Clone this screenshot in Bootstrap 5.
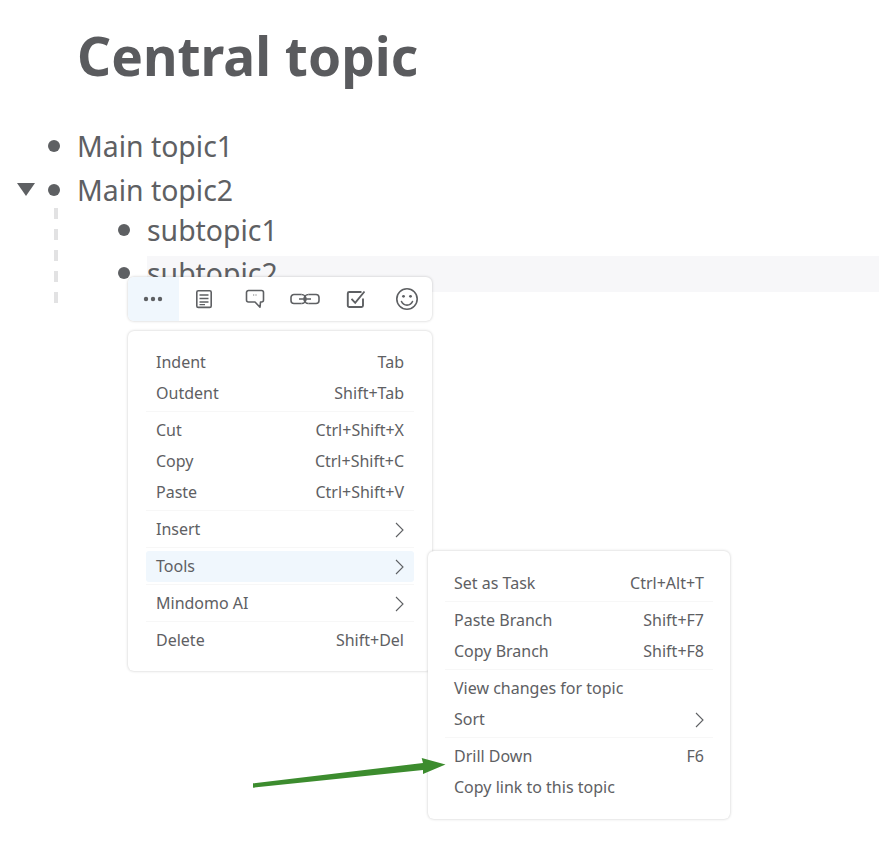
<!doctype html>
<html lang="en"><head><meta charset="utf-8"><title>Outline</title>
<link href="https://cdn.jsdelivr.net/npm/bootstrap@5.3.0/dist/css/bootstrap.min.css" rel="stylesheet">
<style>
html,body{height:100%}
body{font-family:"Noto Sans",sans-serif;color:#5e6063;background:#fff;overflow:hidden}
.stage{position:relative;width:879px;height:856px;overflow:hidden}
.doc-title{font-family:"Noto Sans",sans-serif;font-size:53.2px;line-height:70px;font-weight:700;color:#5a5b5e;margin:0;padding:21px 0 0 77px;height:129px}
.oline{height:36px;font-size:28.4px;line-height:34px;white-space:nowrap}
.caret-slot{width:48px;flex:none;display:flex;align-items:center;padding-left:17px;margin-top:-3px}
.dot{width:12px;height:12px;border-radius:50%;background:#5e6063;flex:none;margin-top:-3px}
.oline-text{margin-left:17px;flex:1 1 auto;align-self:stretch}
.branch{margin-top:4px}
.branch-rule{width:4px;margin-left:54px;flex:none;margin-top:-5px;height:96px;background:repeating-linear-gradient(to bottom,#e2e2e3 0 11px,transparent 11px 21px)}
.kids{margin-left:60px;flex:1 1 auto}
.row-active .oline-text{background:#f7f7f9}
.row-active{margin-top:7px}
.toolbar-box{position:absolute;left:128px;top:277px;width:304px;height:44px;background:#fff;border-radius:6px;box-shadow:0 0 3px rgba(0,0,0,.22);overflow:hidden;z-index:1000}
.tool-slot{flex:1 1 0;display:flex;align-items:center;justify-content:center}
.tool-slot.is-on{background:#f0f7fd}
.menu-pane.dropdown-menu{display:block;color:#5e6063;font-size:16px;border:0;border-radius:6px;box-shadow:0 0 3px rgba(0,0,0,.22);min-width:0;padding:16px 18px;--bs-dropdown-link-color:#5e6063}
.pane-main.dropdown-menu{left:128px;top:331px;width:304px;height:340px}
.pane-sub.dropdown-menu{left:428px;top:551px;width:302px;height:268px;padding:17px 17px 16px;z-index:1001}
.menu-pane .dropdown-item{display:flex;justify-content:space-between;align-items:center;height:31px;padding:0 10px;line-height:31px;color:#5e6063;border-radius:3px;background:none}
.pane-sub .dropdown-item{padding:0 9px}
.menu-pane .dropdown-item.is-hover{background:#f0f7fd}
.menu-pane .dropdown-divider{margin:2px 0 3px;border-top:1px solid #f7f7f7;opacity:1}
.arrow-note{position:absolute;left:250px;top:755px;z-index:1002}
</style></head><body>
<div class="stage">
  <h1 class="doc-title">Central topic</h1>
  <div class="d-flex oline align-items-center mb-2"><div class="caret-slot"></div><span class="dot"></span><div class="oline-text">Main topic1</div></div>
  <div class="d-flex oline align-items-center"><div class="caret-slot"><svg width="18" height="13" viewBox="0 0 18 13"><path d="M0 0H18L9 13Z" fill="#5e6063"/></svg></div><span class="dot"></span><div class="oline-text">Main topic2</div></div>
  <div class="d-flex branch">
    <div class="branch-rule"></div>
    <div class="kids">
      <div class="d-flex oline align-items-center"><span class="dot"></span><div class="oline-text">subtopic1</div></div>
      <div class="d-flex oline align-items-center row-active"><span class="dot"></span><div class="oline-text">subtopic2</div></div>
    </div>
  </div>

  <div class="toolbar-box d-flex">
    <div class="tool-slot is-on"><svg width="20" height="6" viewBox="0 0 20 6"><circle cx="3" cy="3" r="2.2" fill="#5e6063"/><circle cx="10" cy="3" r="2.2" fill="#5e6063"/><circle cx="17" cy="3" r="2.2" fill="#5e6063"/></svg></div>
    <div class="tool-slot"><svg width="18" height="20" viewBox="0 0 18 20" fill="none" stroke="#5e6063" stroke-width="1.6"><rect x="1.8" y="1.8" width="14.4" height="16.6" rx="1.5"/><path d="M4.5 6H13.5M4.5 9.5H13.5M4.5 13H13.500M4.5 15.6H10" stroke-width="1.4"/></svg></div>
    <div class="tool-slot"><svg width="20" height="20" viewBox="0 0 20 20" fill="none" stroke="#5e6063" stroke-width="1.6"><path d="M3.5 1.5H16.5a2 2 0 0 1 2 2V11a2 2 0 0 1-2 2H15.5L15 18.2 10 13H3.5a2 2 0 0 1-2-2V3.500a2 2 0 0 1 2-2Z" stroke-linejoin="round"/><path d="M8.700 5.500v1M11 5.500v1" stroke-width="1"/></svg></div>
    <div class="tool-slot"><svg width="30" height="12" viewBox="0 0 30 12" fill="none" stroke="#5e6063" stroke-width="1.6"><path d="M11.500 1.500H4a3 3 0 0 0-3 3v3a3 3 0 0 0 3 3h7.500"/><path d="M18.500 1.500H26a3 3 0 0 1 3 3v3a3 3 0 0 1-3 3h-7.500"/><path d="M11.500 1.500a4.500 4.500 0 0 1 0 9M18.500 1.500a4.500 4.500 0 0 0 0 9M9 6H21"/></svg></div>
    <div class="tool-slot"><svg width="20" height="20" viewBox="0 0 20 20" fill="none" stroke="#5e6063" stroke-width="1.9"><path d="M17 9.500V16.500a1.500 1.500 0 0 1-1.500 1.500H3.300a1.500 1.500 0 0 1-1.500-1.500V4.500A1.500 1.500 0 0 1 3.300 3H15.500"/><path d="M5.500 9.800 9.200 13.800 18.500 2.500"/></svg></div>
    <div class="tool-slot"><svg width="24" height="24" viewBox="0 0 24 24" fill="none" stroke="#5e6063" stroke-width="1.6"><circle cx="12" cy="12" r="10.200"/><circle cx="8.500" cy="9.300" r="1.400" fill="#5e6063" stroke="none"/><circle cx="15.500" cy="9.300" r="1.400" fill="#5e6063" stroke="none"/><path d="M6.500 14.500a6 6 0 0 0 11 0" stroke-linecap="round"/></svg></div>
  </div>

  <div class="dropdown-menu menu-pane pane-main">
    <div class="dropdown-item"><span>Indent</span><span>Tab</span></div>
    <div class="dropdown-item"><span>Outdent</span><span>Shift+Tab</span></div>
    <hr class="dropdown-divider">
    <div class="dropdown-item"><span>Cut</span><span>Ctrl+Shift+X</span></div>
    <div class="dropdown-item"><span>Copy</span><span>Ctrl+Shift+C</span></div>
    <div class="dropdown-item"><span>Paste</span><span>Ctrl+Shift+V</span></div>
    <hr class="dropdown-divider">
    <div class="dropdown-item"><span>Insert</span><svg width="9" height="16" viewBox="0 0 9 16" fill="none" stroke="#5e6063" stroke-width="1.1"><path d="M1 1 8 8 1 15"/></svg></div>
    <hr class="dropdown-divider">
    <div class="dropdown-item is-hover"><span>Tools</span><svg width="9" height="16" viewBox="0 0 9 16" fill="none" stroke="#5e6063" stroke-width="1.1"><path d="M1 1 8 8 1 15"/></svg></div>
    <hr class="dropdown-divider">
    <div class="dropdown-item"><span>Mindomo AI</span><svg width="9" height="16" viewBox="0 0 9 16" fill="none" stroke="#5e6063" stroke-width="1.1"><path d="M1 1 8 8 1 15"/></svg></div>
    <hr class="dropdown-divider">
    <div class="dropdown-item"><span>Delete</span><span>Shift+Del</span></div>
  </div>

  <div class="dropdown-menu menu-pane pane-sub">
    <div class="dropdown-item"><span>Set as Task</span><span>Ctrl+Alt+T</span></div>
    <hr class="dropdown-divider">
    <div class="dropdown-item"><span>Paste Branch</span><span>Shift+F7</span></div>
    <div class="dropdown-item"><span>Copy Branch</span><span>Shift+F8</span></div>
    <hr class="dropdown-divider">
    <div class="dropdown-item"><span>View changes for topic</span></div>
    <div class="dropdown-item"><span>Sort</span><svg width="9" height="16" viewBox="0 0 9 16" fill="none" stroke="#5e6063" stroke-width="1.1"><path d="M1 1 8 8 1 15"/></svg></div>
    <hr class="dropdown-divider">
    <div class="dropdown-item"><span>Drill Down</span><span>F6</span></div>
    <div class="dropdown-item"><span>Copy link to this topic</span></div>
  </div>

  <svg class="arrow-note" width="200" height="36" viewBox="0 0 200 36"><path d="M3 28.300 173 8 171.700 3 195.500 9.500 173 19 173 15 3 32.700Z" fill="#3c8c2e"/></svg>
</div>
<script src="https://cdn.jsdelivr.net/npm/bootstrap@5.3.0/dist/js/bootstrap.bundle.min.js"></script>
</body></html>
